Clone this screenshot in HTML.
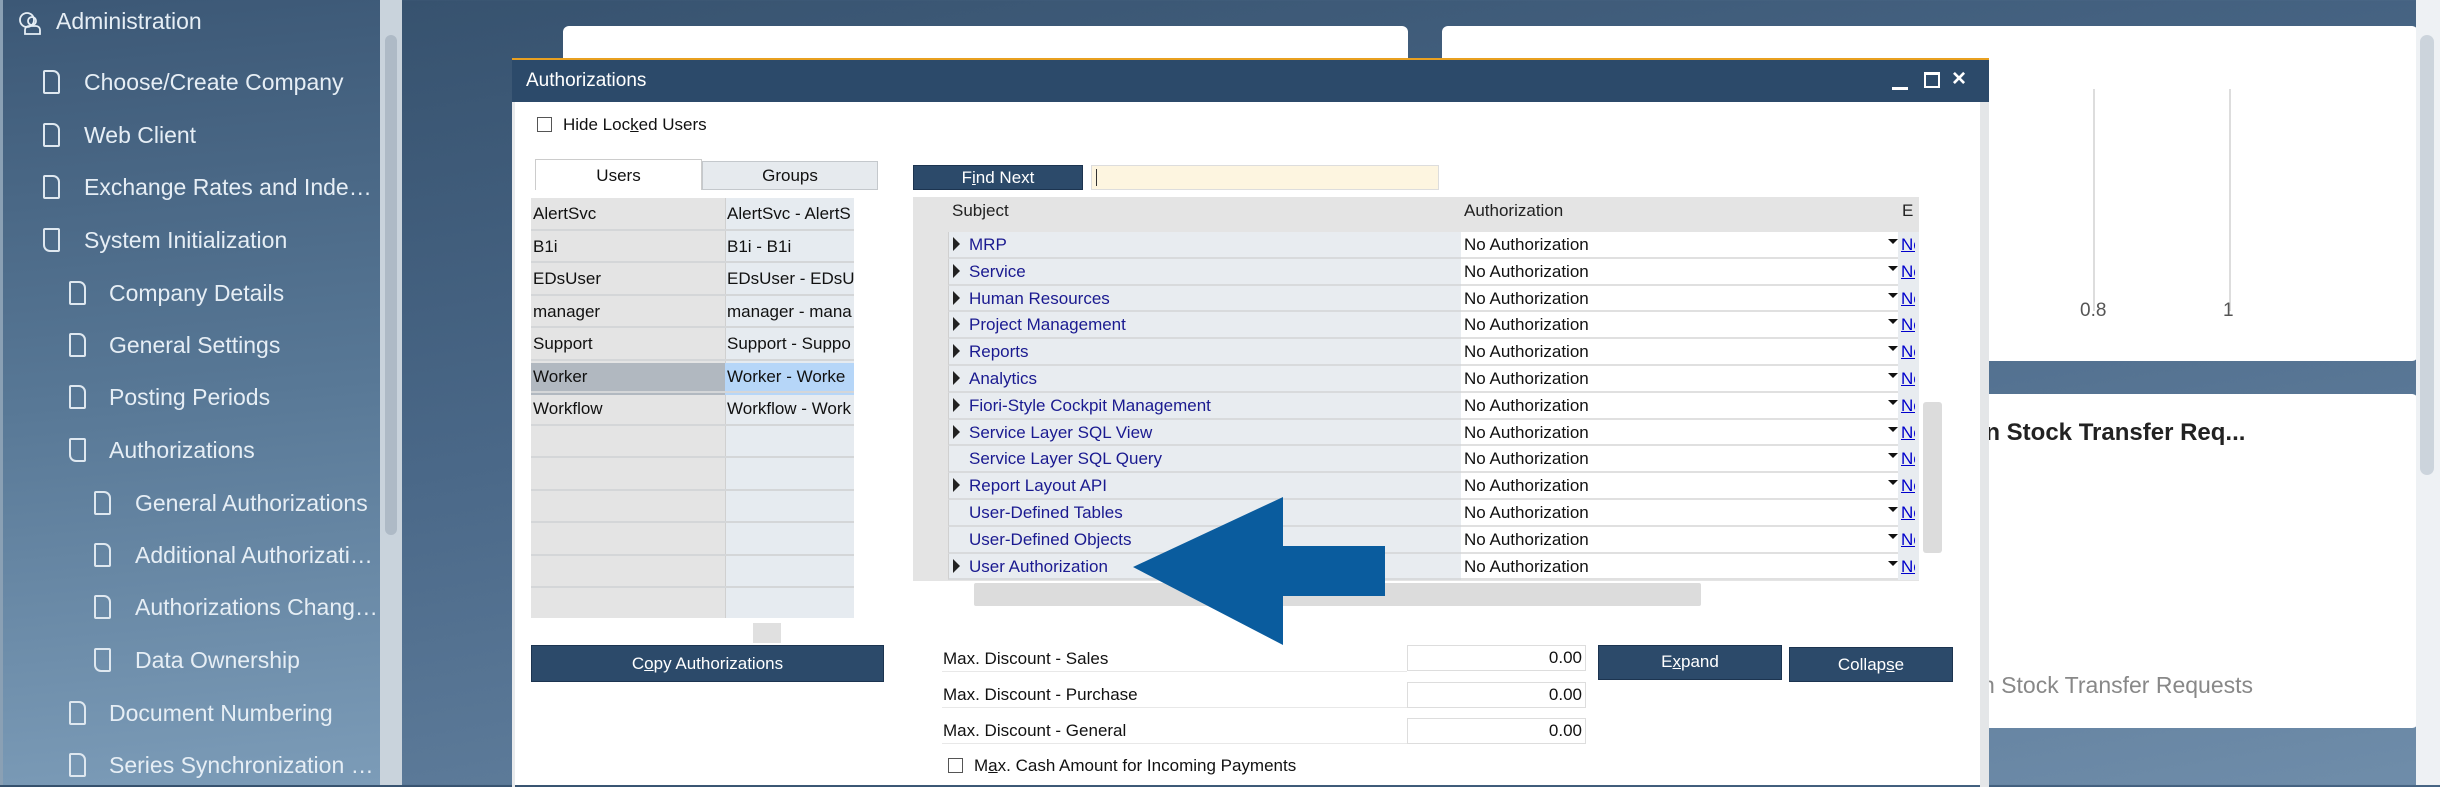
<!DOCTYPE html>
<html><head><meta charset="utf-8"><style>
*{margin:0;padding:0;box-sizing:border-box}
body{width:2440px;height:785px;overflow:hidden;position:relative;font-family:"Liberation Sans",sans-serif;background:linear-gradient(170deg,#344f6b 0%,#4a6888 45%,#6f8daa 100%)}
.a{position:absolute}
.side{left:0;top:0;width:380px;height:785px;background:linear-gradient(175deg,#3c5876 0%,#587896 50%,#7c9cb8 100%);border-left:3px solid #8aa0b4}
.si{position:absolute;color:#e6eef5;font-size:23px;white-space:nowrap}
.ic{position:absolute;width:17px;height:24px;border:2px solid #dfe8f0;border-radius:2px 7px 2px 2px}
.dlg{left:512px;top:58px;width:1477px;height:727px;background:#fff;border-top:2px solid #e8a020}
.t{font-family:"Liberation Sans",sans-serif;font-size:17px;color:#111;white-space:nowrap}
.btn{position:absolute;background:#2c4a6a;color:#fff;font-size:17px;text-align:center;border:1px solid #1c3450}
.card{background:#fff;border-radius:6px}
</style></head><body>
<div class="a side">
 <svg class="a" style="left:14px;top:10px" width="26" height="26" viewBox="0 0 26 26" fill="none" stroke="#e6eef5" stroke-width="1.8"><circle cx="10" cy="10" r="7"/><circle cx="15" cy="11" r="4"/><path d="M8 24v-4a4 4 0 0 1 4-4h7a4 4 0 0 1 4 4v4z"/></svg>
 <div class="si" style="left:53px;top:8px">Administration</div>
 <div class="ic" style="left:40px;top:70px"></div><div class="si" style="left:81px;top:69px">Choose/Create Company</div>
 <div class="ic" style="left:40px;top:123px"></div><div class="si" style="left:81px;top:122px">Web Client</div>
 <div class="ic" style="left:40px;top:175px"></div><div class="si" style="left:81px;top:174px">Exchange Rates and Inde…</div>
 <div class="ic" style="left:40px;top:228px;border-radius:2px 2px 2px 7px"></div><div class="si" style="left:81px;top:227px">System Initialization</div>
 <div class="ic" style="left:66px;top:281px"></div><div class="si" style="left:106px;top:280px">Company Details</div>
 <div class="ic" style="left:66px;top:333px"></div><div class="si" style="left:106px;top:332px">General Settings</div>
 <div class="ic" style="left:66px;top:385px"></div><div class="si" style="left:106px;top:384px">Posting Periods</div>
 <div class="ic" style="left:66px;top:438px;border-radius:2px 2px 2px 7px"></div><div class="si" style="left:106px;top:437px">Authorizations</div>
 <div class="ic" style="left:91px;top:491px"></div><div class="si" style="left:132px;top:490px">General Authorizations</div>
 <div class="ic" style="left:91px;top:543px"></div><div class="si" style="left:132px;top:542px">Additional Authorizati…</div>
 <div class="ic" style="left:91px;top:595px"></div><div class="si" style="left:132px;top:594px">Authorizations Chang…</div>
 <div class="ic" style="left:91px;top:648px;border-radius:2px 2px 2px 7px"></div><div class="si" style="left:132px;top:647px">Data Ownership</div>
 <div class="ic" style="left:66px;top:701px"></div><div class="si" style="left:106px;top:700px">Document Numbering</div>
 <div class="ic" style="left:66px;top:753px"></div><div class="si" style="left:106px;top:752px">Series Synchronization …</div>
</div>
<div class="a" style="left:380px;top:0;width:22px;height:785px;background:#c9d3dc"></div>
<div class="a" style="left:385px;top:35px;width:12px;height:500px;background:#aebac6;border-radius:6px"></div>

<div class="a card" style="left:563px;top:26px;width:845px;height:80px"></div>
<div class="a card" style="left:1442px;top:26px;width:976px;height:335px"></div>
<div class="a" style="left:2093px;top:89px;width:2px;height:222px;background:#ddd"></div>
<div class="a" style="left:2229px;top:89px;width:2px;height:222px;background:#ddd"></div>
<div class="a" style="left:2080px;top:300px;font-size:19px;color:#555">0.8</div>
<div class="a" style="left:2223px;top:300px;font-size:19px;color:#555">1</div>
<div class="a card" style="left:1442px;top:394px;width:976px;height:334px"></div>
<div class="a" style="left:1972px;top:419px;font-size:24px;font-weight:bold;color:#222;white-space:nowrap">en Stock Transfer Req...</div>
<div class="a" style="left:1982px;top:672px;font-size:23px;color:#888;white-space:nowrap">n Stock Transfer Requests</div>
<div class="a" style="left:2416px;top:0;width:24px;height:785px;background:#eef1f4"></div>
<div class="a" style="left:2420px;top:35px;width:14px;height:440px;background:#ccd4dc;border-radius:7px"></div>

<div class="a dlg">
 <div class="a" style="left:0;top:0;width:1477px;height:42px;background:#2c4a6a"></div>
 <div class="a" style="left:14px;top:10px;font-size:19px;color:#fff">Authorizations</div>
 <div class="a" style="left:1380px;top:27px;width:16px;height:3px;background:#fff"></div>
 <div class="a" style="left:1412px;top:12px;width:16px;height:16px;border:2px solid #fff;border-top-width:3px"></div>
 <div class="a" style="left:1440px;top:5px;font-size:24px;color:#fff;font-weight:bold">×</div>
 <div class="a" style="left:1468px;top:42px;width:9px;height:685px;background:#e4e6e8"></div>
 <div class="a" style="left:0;top:42px;width:3px;height:685px;background:#e8eaec"></div>

 <div class="a" style="left:25px;top:57px;width:15px;height:15px;border:1px solid #555"></div>
 <div class="a t" style="left:51px;top:55px">Hide Loc<u>k</u>ed Users</div>

 <div class="a t" style="left:23px;top:99px;width:167px;height:31px;border:1px solid #ccc;border-bottom:none;text-align:center;padding-top:6px">Users</div>
 <div class="a t" style="left:190px;top:101px;width:176px;height:29px;background:#e6eaee;border:1px solid #c4c8cc;text-align:center;padding-top:4px">Groups</div>

 <div class="a" style="left:19px;top:138px;width:323px;height:420px;background:#e4e4e4"></div>
 <div class="a" style="left:213px;top:138px;width:129px;height:420px;background:#e6ebf0;border-left:1px solid #d0d0d0"></div>
 <div class="a" style="left:19px;top:303px;width:194px;height:32px;background:#b1b8c0"></div>
 <div class="a" style="left:213px;top:303px;width:129px;height:32px;background:#b6d6f8"></div>
 <div class="a" id="ug" style="left:19px;top:138px;width:323px;height:420px;overflow:hidden">
 </div>
 <div class="a" style="left:241px;top:563px;width:28px;height:20px;background:#e0e0e0"></div>
 <div class="btn" style="left:19px;top:585px;width:353px;height:37px;padding-top:8px">C<u>o</u>py Authorizations</div>

 <div class="btn" style="left:401px;top:105px;width:170px;height:25px;padding-top:2px">F<u>i</u>nd Next</div>
 <div class="a" style="left:579px;top:105px;width:348px;height:25px;background:#fdf5e0;border:1px solid #ddd"><div style="margin:3px 0 0 4px;width:1px;height:17px;background:#333"></div></div>

 <div class="a" style="left:401px;top:137px;width:1006px;height:384px;background:#e4e4e4"></div>
 <div class="a t" style="left:440px;top:141px;color:#222">Subject</div>
 <div class="a t" style="left:952px;top:141px;color:#222">Authorization</div>
 <div class="a t" style="left:1390px;top:141px;color:#222">E</div>
 <div class="a" id="mg" style="left:401px;top:172px;width:1006px;height:350px"></div>
 <div class="a" style="left:1411px;top:342px;width:19px;height:151px;background:#dcdcdc;border-radius:3px"></div>
 <div class="a" style="left:462px;top:523px;width:727px;height:23px;background:#dcdcdc;border-radius:2px"></div>

 <div class="a t" style="left:431px;top:589px">Max. Discount - Sales</div>
 <div class="a t" style="left:431px;top:625px">Max. Discount - Purchase</div>
 <div class="a t" style="left:431px;top:661px">Max. Discount - General</div>
 <div class="a" style="left:430px;top:611px;width:465px;height:1px;background:#e8e8e8"></div>
 <div class="a" style="left:430px;top:647px;width:465px;height:1px;background:#e8e8e8"></div>
 <div class="a" style="left:430px;top:683px;width:465px;height:1px;background:#e8e8e8"></div>
 <div class="a t" style="left:895px;top:585px;width:179px;height:26px;border:1px solid #ddd;text-align:right;padding:2px 3px 0 0">0.00</div>
 <div class="a t" style="left:895px;top:622px;width:179px;height:26px;border:1px solid #ddd;text-align:right;padding:2px 3px 0 0">0.00</div>
 <div class="a t" style="left:895px;top:658px;width:179px;height:26px;border:1px solid #ddd;text-align:right;padding:2px 3px 0 0">0.00</div>
 <div class="btn" style="left:1086px;top:585px;width:184px;height:35px;padding-top:6px">E<u>x</u>pand</div>
 <div class="btn" style="left:1277px;top:587px;width:164px;height:35px;padding-top:7px">Collap<u>s</u>e</div>
 <div class="a" style="left:436px;top:698px;width:15px;height:15px;border:1px solid #555"></div>
 <div class="a t" style="left:462px;top:696px">M<u>a</u>x. Cash Amount for Incoming Payments</div>
</div>

<svg class="a" style="left:0;top:0" width="2440" height="785"><polygon points="1133,567 1283,497 1283,546 1385,546 1385,596 1283,596 1283,645" fill="#0a5c9e"/></svg>

<script>
var u=[["AlertSvc","AlertSvc - AlertS"],["B1i","B1i - B1i"],["EDsUser","EDsUser - EDsU"],["manager","manager - mana"],["Support","Support - Suppo"],["Worker","Worker - Worke"],["Workflow","Workflow - Work"]];
var h="";for(var i=0;i<13;i++){var r=u[i]||["",""];h+='<div style="position:absolute;left:0;top:'+(i*32.5)+'px;width:323px;height:32.5px;border-bottom:2px solid #d4d6d8"><span class="t" style="position:absolute;left:2px;top:6px">'+r[0]+'</span><span class="t" style="position:absolute;left:196px;top:6px">'+r[1]+'</span></div>';}
document.getElementById("ug").innerHTML=h;
var m=[["MRP",1],["Service",1],["Human Resources",1],["Project Management",1],["Reports",1],["Analytics",1],["Fiori-Style Cockpit Management",1],["Service Layer SQL View",1],["Service Layer SQL Query",0],["Report Layout API",1],["User-Defined Tables",0],["User-Defined Objects",0],["User Authorization",1]];
h="";for(i=0;i<13;i++){var y=i*26.8;h+='<div style="position:absolute;left:35px;top:'+y+'px;width:513px;height:26.8px;background:#e8ecf0;border-bottom:2px solid #d8dadc;border-left:1px solid #d0d0d0"></div>'+
(m[i][1]?'<div style="position:absolute;left:40px;top:'+(y+5)+'px;width:0;height:0;border-left:7px solid #222;border-top:7px solid transparent;border-bottom:7px solid transparent"></div>':'')+
'<span class="t" style="position:absolute;left:56px;top:'+(y+3)+'px;color:#1a1a90">'+m[i][0]+'</span>'+
'<div style="position:absolute;left:548px;top:'+y+'px;width:437px;height:26.8px;background:#fff;border-bottom:2px solid #e0e0e0"></div>'+
'<span class="t" style="position:absolute;left:551px;top:'+(y+3)+'px">No Authorization</span>'+
'<div style="position:absolute;left:975px;top:'+(y+7)+'px;border-top:5px solid #111;border-left:5px solid transparent;border-right:5px solid transparent"></div>'+
'<div style="position:absolute;left:985px;top:'+y+'px;width:21px;height:26.8px;background:#e8ecf0"></div>'+
'<span class="t" style="position:absolute;left:988px;top:'+(y+3)+'px;width:14px;overflow:hidden;color:#00c;text-decoration:underline">No</span>';}
document.getElementById("mg").innerHTML=h;
</script>
</body></html>
